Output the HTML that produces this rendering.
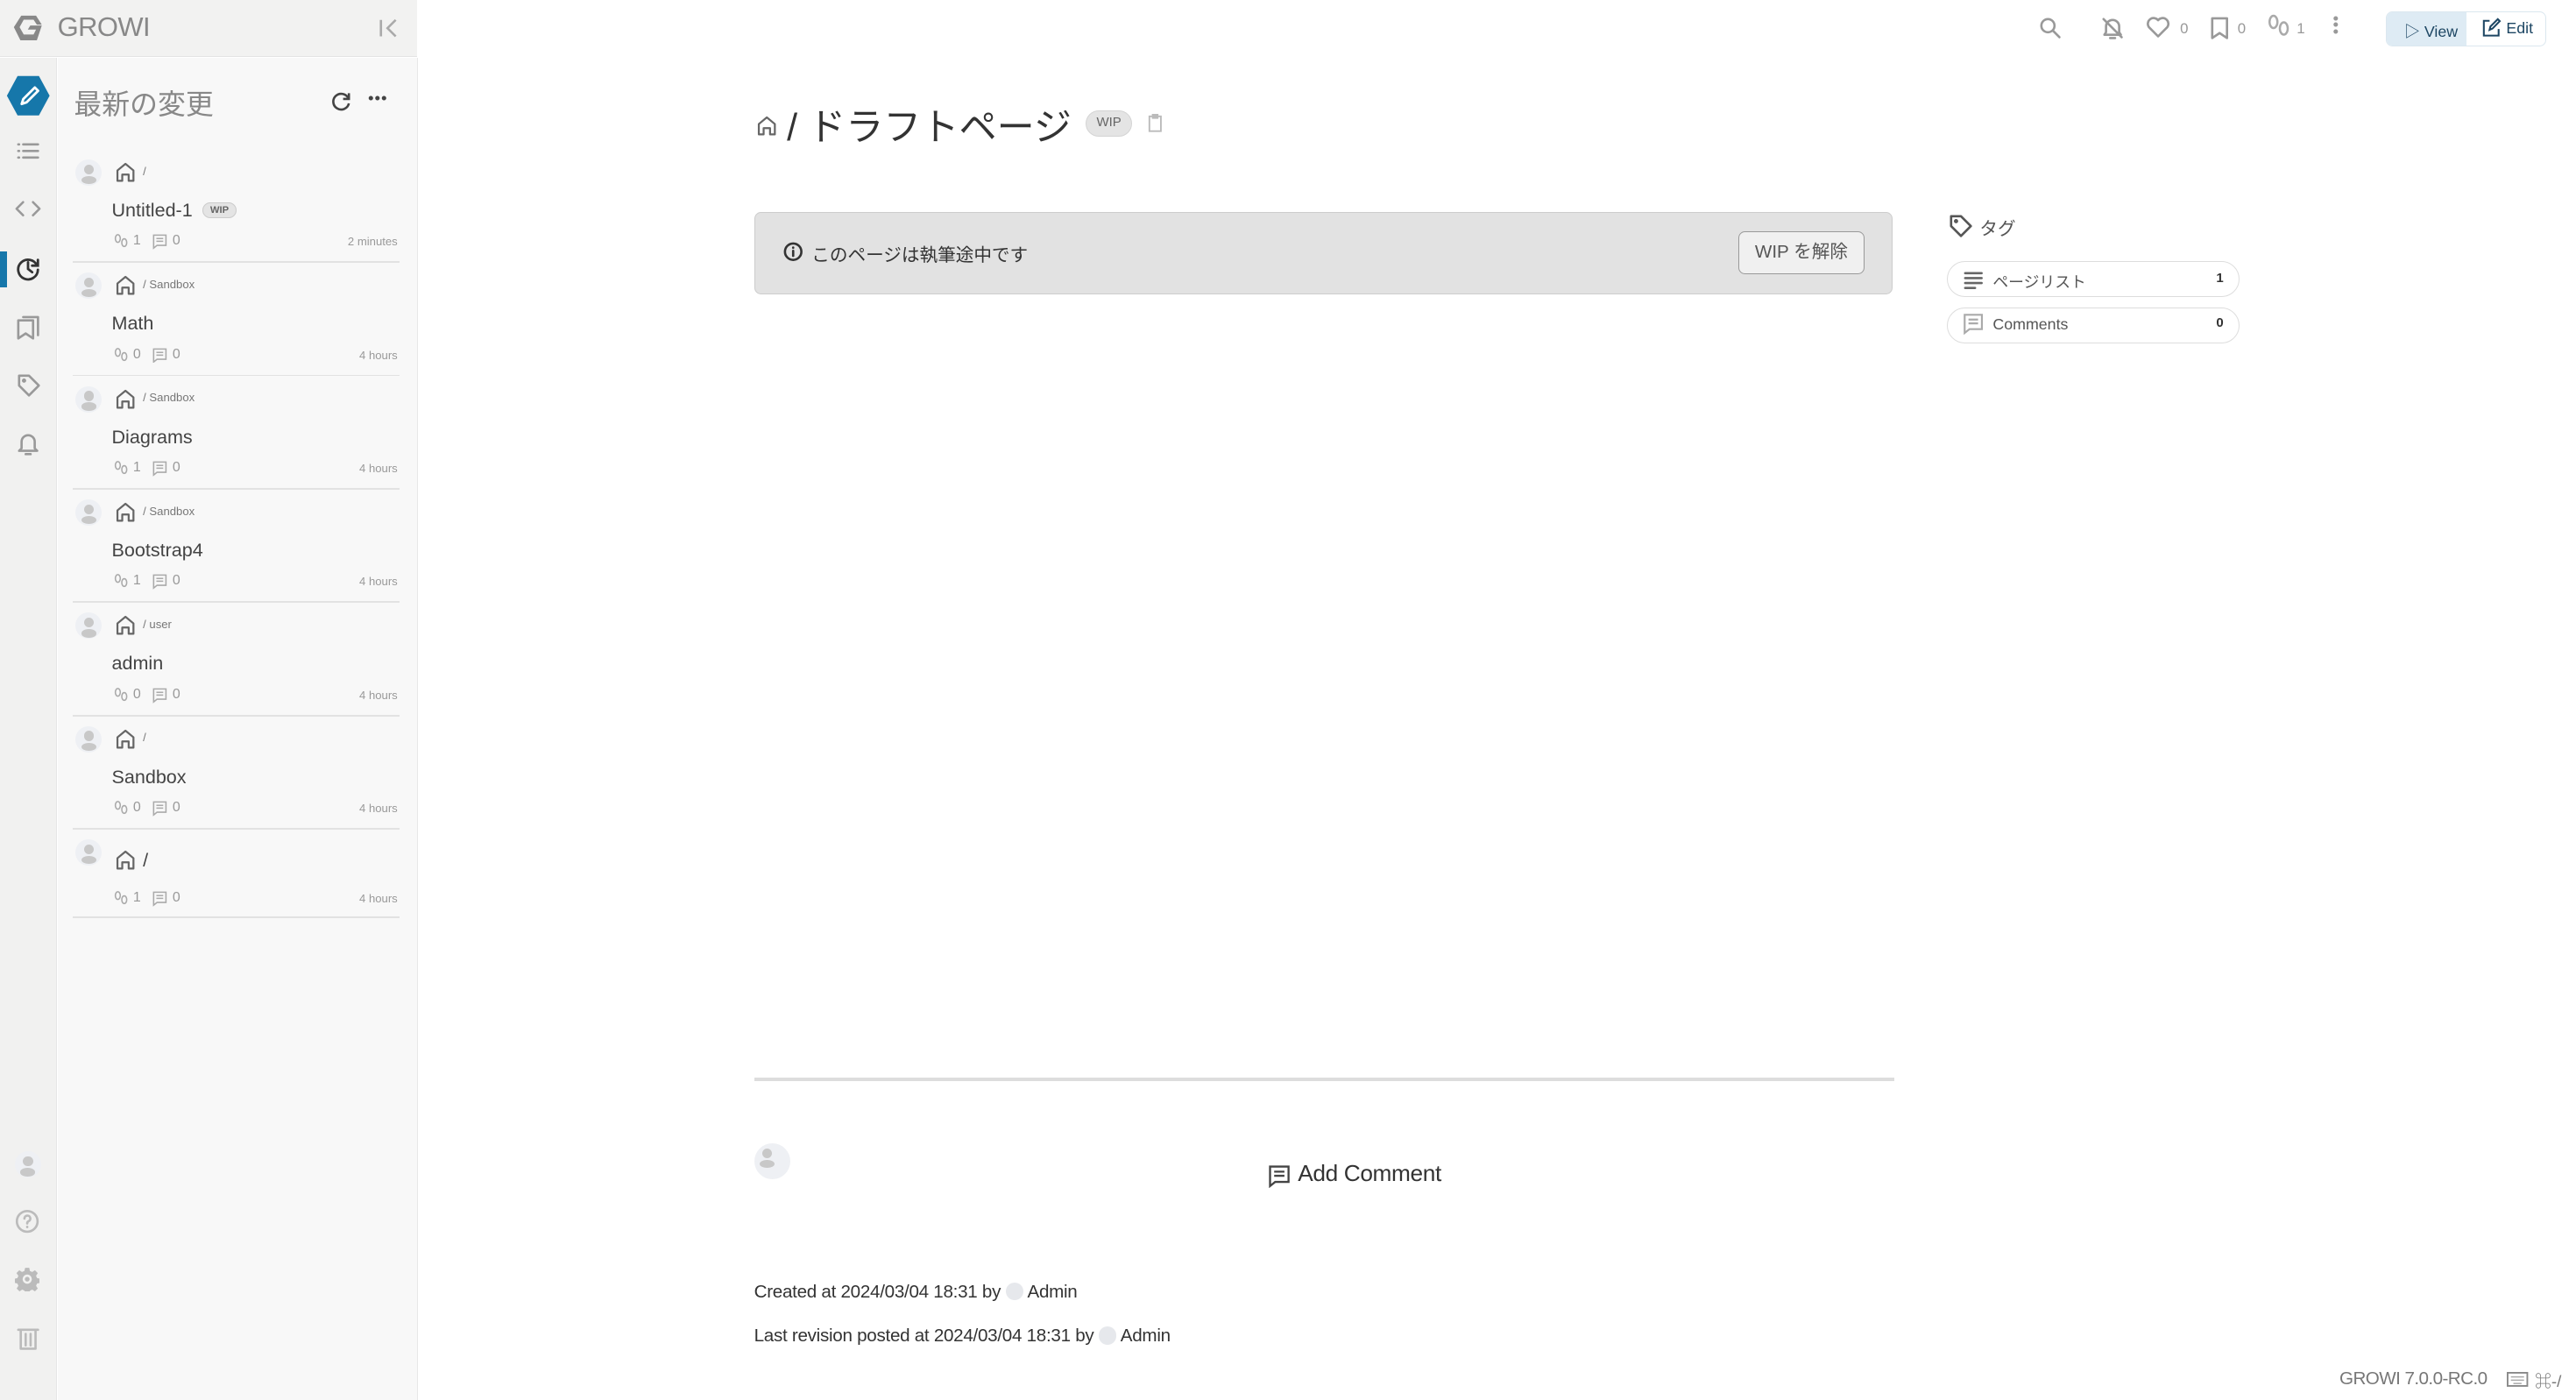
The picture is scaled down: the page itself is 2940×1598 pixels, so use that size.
<!DOCTYPE html>
<html><head><meta charset="utf-8">
<style>
html,body{margin:0;padding:0}
body{width:1568px;height:851.2px;zoom:1.875;position:relative;overflow:hidden;background:#fff;font-family:"Liberation Sans","Noto Sans CJK JP",sans-serif;color:#333}
.a{position:absolute;white-space:nowrap}
.rail{left:0;top:35px;width:34px;height:817px;background:#f1f1f0;border-right:1px solid #e6e6e6}
.hdr{left:0;top:0;width:254px;height:34px;background:#f2f2f1;border-bottom:1px solid #e4e4e4}
.panel{left:35px;top:35px;width:219px;height:817px;background:#f8f8f8;border-right:1px solid #e8e8e8}
.ic{stroke:#999;fill:none;stroke-width:1.4;stroke-linecap:round;stroke-linejoin:round}
.av{width:16px;height:16px;border-radius:50%;background:#eef0f4;overflow:hidden}
.av:before{content:"";position:absolute;left:5px;top:3px;width:6px;height:6px;border-radius:50%;background:#c8c8c8}
.av:after{content:"";position:absolute;left:3.5px;top:10px;width:9px;height:5px;border-radius:50%;background:#c8c8c8}
.path{font-size:7px;color:#777}
.title{font-size:11.5px;color:#444}
.meta{font-size:8.5px;color:#999}
.time{font-size:7px;color:#999;right:1326px}
.line{left:44px;width:199px;height:1px;background:#e2e2e2}
.wip{font-size:6px;font-weight:bold;color:#666;background:#e4e4e4;border:1px solid #ccc;border-radius:8px;padding:1px 4px}
</style></head><body>
<svg width="0" height="0" style="position:absolute">
<defs>
<symbol id="home" viewBox="0 0 12 12"><path d="M1.5 11V5.2L6 1.5l4.5 3.7V11H7.8V7.5H4.2V11z" fill="none" stroke="#666" stroke-width="1.1" stroke-linejoin="round"/></symbol>
<symbol id="foot" viewBox="0 0 12 12"><ellipse cx="3.5" cy="4" rx="1.8" ry="2.8" fill="none" stroke="#aaa" stroke-width="1"/><ellipse cx="8.2" cy="7" rx="1.8" ry="2.8" fill="none" stroke="#aaa" stroke-width="1"/></symbol>
<symbol id="cmt" viewBox="0 0 12 12"><path d="M1.5 1.5h9v7.5H4L1.5 11z M3.5 4h5 M3.5 6h5" fill="none" stroke="#aaa" stroke-width="1"/></symbol>
</defs></svg>

<div class="a hdr"></div>
<svg class="a" style="left:7px;top:8px" width="20" height="18" viewBox="0 0 20 18"><path d="M6 1.5h9l3.5 5.5h-3l-2-3H7.5L5 8.5l2.5 4.5h6l1.5-3h-5l1.5-2.5h7L15.5 16.5h-10L1.5 8.5z" fill="#888"/></svg>
<div class="a" style="left:35px;top:7px;font-size:16.5px;color:#888;letter-spacing:-0.3px">GROWI</div>
<svg class="a" style="left:230px;top:10px" width="14" height="14" viewBox="0 0 14 14"><path d="M2 2v10M11 2L6 7l5 5" fill="none" stroke="#aaa" stroke-width="1.4"/></svg>

<div class="a rail"></div>
<div class="a panel"></div>
<svg class="a" style="left:3px;top:44px" width="28" height="28" viewBox="0 0 28 28"><polygon points="7.5,2 20.5,2 27,14 20.5,26 7.5,26 1,14" fill="#1677aa"/><path d="M10 19l1-3 7-7 2 2-7 7z" fill="none" stroke="#fff" stroke-width="1.5" stroke-linejoin="round"/></svg>
<svg class="a ic" style="left:10px;top:86px" width="14" height="12" viewBox="0 0 14 12"><path d="M1 2h.5M1 6h.5M1 10h.5M4 2h9M4 6h9M4 10h9"/></svg>
<svg class="a ic" style="left:9px;top:121px" width="16" height="12" viewBox="0 0 16 12"><path d="M5 2L1 6l4 4M11 2l4 4-4 4"/></svg>
<div class="a" style="left:0;top:153px;width:4px;height:22px;background:#1677aa"></div>
<svg class="a" style="left:9px;top:155px" width="16" height="16" viewBox="0 0 16 16"><path d="M13.5 6.5A6 6 0 1 0 14 9 M14 3v3.5h-3.5 M8 4.5V8.5l2.5 2" fill="none" stroke="#333" stroke-width="1.5" stroke-linecap="round"/></svg>
<svg class="a ic" style="left:10px;top:192px" width="14" height="15" viewBox="0 0 14 15"><path d="M1 3h9v11l-4.5-3L1 14z M4 1h9v11"/></svg>
<svg class="a ic" style="left:10px;top:227px" width="15" height="15" viewBox="0 0 15 15"><path d="M1.5 1.5h6l6 6-6 6-6-6z"/><circle cx="4.5" cy="4.5" r=".6"/></svg>
<svg class="a ic" style="left:10px;top:263px" width="14" height="15" viewBox="0 0 14 15"><path d="M3 10V6a4 4 0 0 1 8 0v4l1.5 1.5h-11z M5.5 13.5h3"/></svg>
<div class="a av" style="left:9px;top:701px"></div>
<svg class="a ic" style="left:9px;top:736px" width="15" height="15" viewBox="0 0 15 15"><circle cx="7.5" cy="7.5" r="6.3" stroke="#bbb"/><path d="M5.8 5.8a1.8 1.8 0 1 1 2.4 1.7c-.6.3-.7.7-.7 1.3 M7.5 10.8v.2" stroke="#bbb"/></svg>
<svg class="a" style="left:9px;top:771px" width="15" height="15" viewBox="0 0 24 24"><path d="M10 1h4l.6 3 2.3 1 2.6-1.7 2.8 2.8-1.7 2.6 1 2.3 3 .6v4l-3 .6-1 2.3 1.7 2.6-2.8 2.8-2.6-1.7-2.3 1-.6 3h-4l-.6-3-2.3-1-2.6 1.7-2.8-2.8 1.7-2.6-1-2.3-3-.6v-4l3-.6 1-2.3L1.5 6.1l2.8-2.8 2.6 1.7 2.3-1z" fill="#bbb"/><circle cx="12" cy="12" r="4.5" fill="#f1f1f0"/><circle cx="12" cy="12" r="2.3" fill="#bbb"/></svg>
<svg class="a ic" style="left:10px;top:808px" width="14" height="14" viewBox="0 0 14 14"><path d="M1 1.5h12 M2.5 1.5V13h9V1.5 M5.5 4v7 M8.5 4v7" stroke="#bbb"/></svg>

<div class="a" style="left:45px;top:50px;font-size:17px;color:#888">最新の変更</div>
<svg class="a" style="left:201px;top:55px" width="13" height="13" viewBox="0 0 13 13"><path d="M11 5A4.8 4.8 0 1 0 11.3 8 M11.3 1.8v3.5H7.8" fill="none" stroke="#444" stroke-width="1.4"/></svg>
<div class="a" style="left:224px;top:54px;font-size:10px;color:#444;letter-spacing:0.5px">•••</div>

<div class="a av" style="left:46px;top:97px"></div>
<svg class="a" style="left:70px;top:98px" width="13" height="13"><use href="#home"/></svg>
<div class="a path" style="left:87px;top:100px">/</div>
<div class="a title" style="left:68px;top:121px">Untitled-1 <span class="wip" style="position:relative;top:-2px;margin-left:3px">WIP</span></div>
<svg class="a" style="left:69px;top:142px" width="10" height="10"><use href="#foot"/></svg><div class="a meta" style="left:81px;top:142px">1</div>
<svg class="a" style="left:92px;top:142px" width="10" height="10"><use href="#cmt"/></svg><div class="a meta" style="left:105px;top:142px">0</div>
<div class="a time" style="right:1326px;top:143px">2 minutes</div>
<div class="a line" style="top:159px"></div>

<div class="a av" style="left:46px;top:166px"></div>
<svg class="a" style="left:70px;top:167px" width="13" height="13"><use href="#home"/></svg>
<div class="a path" style="left:87px;top:169px">/ Sandbox</div>
<div class="a title" style="left:68px;top:190px">Math</div>
<svg class="a" style="left:69px;top:211px" width="10" height="10"><use href="#foot"/></svg><div class="a meta" style="left:81px;top:211px">0</div>
<svg class="a" style="left:92px;top:211px" width="10" height="10"><use href="#cmt"/></svg><div class="a meta" style="left:105px;top:211px">0</div>
<div class="a time" style="right:1326px;top:212px">4 hours</div>
<div class="a line" style="top:228px"></div>

<div class="a av" style="left:46px;top:235px"></div>
<svg class="a" style="left:70px;top:236px" width="13" height="13"><use href="#home"/></svg>
<div class="a path" style="left:87px;top:238px">/ Sandbox</div>
<div class="a title" style="left:68px;top:259px">Diagrams</div>
<svg class="a" style="left:69px;top:280px" width="10" height="10"><use href="#foot"/></svg><div class="a meta" style="left:81px;top:280px">1</div>
<svg class="a" style="left:92px;top:280px" width="10" height="10"><use href="#cmt"/></svg><div class="a meta" style="left:105px;top:280px">0</div>
<div class="a time" style="right:1326px;top:281px">4 hours</div>
<div class="a line" style="top:297px"></div>

<div class="a av" style="left:46px;top:304px"></div>
<svg class="a" style="left:70px;top:305px" width="13" height="13"><use href="#home"/></svg>
<div class="a path" style="left:87px;top:307px">/ Sandbox</div>
<div class="a title" style="left:68px;top:328px">Bootstrap4</div>
<svg class="a" style="left:69px;top:349px" width="10" height="10"><use href="#foot"/></svg><div class="a meta" style="left:81px;top:349px">1</div>
<svg class="a" style="left:92px;top:349px" width="10" height="10"><use href="#cmt"/></svg><div class="a meta" style="left:105px;top:349px">0</div>
<div class="a time" style="right:1326px;top:350px">4 hours</div>
<div class="a line" style="top:366px"></div>

<div class="a av" style="left:46px;top:373px"></div>
<svg class="a" style="left:70px;top:374px" width="13" height="13"><use href="#home"/></svg>
<div class="a path" style="left:87px;top:376px">/ user</div>
<div class="a title" style="left:68px;top:397px">admin</div>
<svg class="a" style="left:69px;top:418px" width="10" height="10"><use href="#foot"/></svg><div class="a meta" style="left:81px;top:418px">0</div>
<svg class="a" style="left:92px;top:418px" width="10" height="10"><use href="#cmt"/></svg><div class="a meta" style="left:105px;top:418px">0</div>
<div class="a time" style="right:1326px;top:419px">4 hours</div>
<div class="a line" style="top:435px"></div>

<div class="a av" style="left:46px;top:442px"></div>
<svg class="a" style="left:70px;top:443px" width="13" height="13"><use href="#home"/></svg>
<div class="a path" style="left:87px;top:445px">/</div>
<div class="a title" style="left:68px;top:466px">Sandbox</div>
<svg class="a" style="left:69px;top:487px" width="10" height="10"><use href="#foot"/></svg><div class="a meta" style="left:81px;top:487px">0</div>
<svg class="a" style="left:92px;top:487px" width="10" height="10"><use href="#cmt"/></svg><div class="a meta" style="left:105px;top:487px">0</div>
<div class="a time" style="right:1326px;top:488px">4 hours</div>
<div class="a line" style="top:504px"></div>

<div class="a av" style="left:46px;top:511px"></div>
<svg class="a" style="left:70px;top:517px" width="13" height="13"><use href="#home"/></svg>
<div class="a title" style="left:87px;top:517px">/</div>
<svg class="a" style="left:69px;top:542px" width="10" height="10"><use href="#foot"/></svg><div class="a meta" style="left:81px;top:542px">1</div>
<svg class="a" style="left:92px;top:542px" width="10" height="10"><use href="#cmt"/></svg><div class="a meta" style="left:105px;top:542px">0</div>
<div class="a time" style="right:1326px;top:543px">4 hours</div>
<div class="a line" style="top:558px"></div>

<svg class="a ic" style="left:1241px;top:10px" width="14" height="14" viewBox="0 0 14 14"><circle cx="5.5" cy="5.5" r="4"/><path d="M8.5 8.5l4 4"/></svg>
<svg class="a ic" style="left:1279px;top:10px" width="14" height="14" viewBox="0 0 14 14"><path d="M3 9.5V6a4 4 0 0 1 8 0v3.5l1 1.5H2z M5.5 13h3 M1.5 1.5l11 11"/></svg>
<svg class="a ic" style="left:1306px;top:10px" width="15" height="13" viewBox="0 0 15 13"><path d="M7.5 12L2 6.5A3.2 3.2 0 0 1 7.5 2.2 3.2 3.2 0 0 1 13 6.5z"/></svg>
<div class="a" style="left:1327px;top:12px;font-size:9px;color:#999">0</div>
<svg class="a ic" style="left:1345px;top:10px" width="12" height="14" viewBox="0 0 12 14"><path d="M1.5 1h9v12L6 10l-4.5 3z"/></svg>
<div class="a" style="left:1362px;top:12px;font-size:9px;color:#999">0</div>
<svg class="a" style="left:1379px;top:8px" width="16" height="16"><use href="#foot"/></svg>
<div class="a" style="left:1398px;top:12px;font-size:9px;color:#999">1</div>
<div class="a" style="left:1420px;top:9px;width:3px;font-size:10px;color:#999;line-height:4px;white-space:normal">•<br>•<br>•</div>
<div class="a" style="left:1452px;top:7px;width:97px;height:20px;border:1px solid #dbe7ef;border-radius:4px;background:#fff;overflow:hidden">
 <div class="a" style="left:0;top:0;width:49px;height:20px;background:#deebf4"></div>
 <div class="a" style="left:11px;top:4px;font-size:9.5px;color:#1d4663">▷ View</div>
 <svg class="a" style="left:58px;top:3px" width="12" height="12" viewBox="0 0 12 12"><path d="M5 2H1.5v9h9V7 M5 7.5l.5-2L10 1l1.2 1.2L6.8 6.7z" fill="none" stroke="#1d4663" stroke-width="1.1"/></svg>
 <div class="a" style="left:73px;top:4px;font-size:9.5px;color:#1d4663">Edit</div>
</div>

<svg class="a" style="left:460px;top:70px" width="13" height="13"><use href="#home"/></svg>
<div class="a" style="left:479px;top:59px;font-size:23px;color:#333">/ ドラフトページ</div>
<div class="a" style="left:661px;top:67px;width:28px;height:16px;border-radius:8px;background:#e4e4e4;border:1px solid #d4d4d4;box-sizing:border-box;font-size:8px;color:#666;text-align:center;line-height:14px">WIP</div>
<svg class="a" style="left:698px;top:69px" width="10" height="12" viewBox="0 0 10 12"><path d="M1.5 2h7v9h-7z M3.5 1h3v2h-3z" fill="none" stroke="#bbb" stroke-width="1"/></svg>

<div class="a" style="left:459px;top:129px;width:692px;height:49px;background:#e2e2e2;border:1px solid #ccc;border-radius:4px"></div>
<svg class="a ic" style="left:477px;top:147px" width="12" height="12" viewBox="0 0 12 12"><circle cx="6" cy="6" r="5" stroke="#333"/><path d="M6 5.5v3 M6 3.5v.1" stroke="#333"/></svg>
<div class="a" style="left:494px;top:146px;font-size:11px;color:#333">このページは執筆途中です</div>
<div class="a" style="left:1058px;top:141px;width:77px;height:26px;box-sizing:border-box;border:1px solid #999;border-radius:4px;background:#f0f0f0;font-size:11px;color:#555;text-align:center;line-height:24px">WIP を解除</div>

<svg class="a ic" style="left:1186px;top:130px" width="15" height="15" viewBox="0 0 15 15"><path d="M1.5 1.5h6l6 6-6 6-6-6z" stroke="#555"/><circle cx="4.5" cy="4.5" r=".6" stroke="#555"/></svg>
<div class="a" style="left:1205px;top:130px;font-size:11px;color:#555">タグ</div>
<div class="a" style="left:1185px;top:159px;width:178px;height:22px;box-sizing:border-box;border:1px solid #ddd;border-radius:11px;background:#fff"></div>
<svg class="a ic" style="left:1195px;top:164px" width="12" height="12" viewBox="0 0 12 12"><path d="M1 2h10M1 5h10M1 8h10M1 11h6" stroke="#666"/></svg>
<div class="a" style="left:1213px;top:164px;font-size:9.5px;color:#555">ページリスト</div>
<div class="a" style="left:1349px;top:165px;font-size:8px;color:#333;font-weight:bold">1</div>
<div class="a" style="left:1185px;top:187px;width:178px;height:22px;box-sizing:border-box;border:1px solid #ddd;border-radius:11px;background:#fff"></div>
<svg class="a" style="left:1194px;top:190px" width="14" height="14"><use href="#cmt"/></svg>
<div class="a" style="left:1213px;top:192px;font-size:9.5px;color:#555">Comments</div>
<div class="a" style="left:1349px;top:192px;font-size:8px;color:#333;font-weight:bold">0</div>

<div class="a" style="left:459px;top:656px;width:694px;height:2px;background:#ddd"></div>
<div class="a av" style="left:459px;top:696px;width:22px;height:22px"></div>
<svg class="a" style="left:771px;top:708px" width="15" height="15" viewBox="0 0 12 12"><path d="M1.5 1.5h9v7.5H4L1.5 11z M3.5 4h5 M3.5 6h5" fill="none" stroke="#444" stroke-width="1"/></svg>
<div class="a" style="left:790px;top:706px;font-size:14px;color:#333;letter-spacing:-0.2px">Add Comment</div>
<div class="a" style="left:459px;top:780px;font-size:11px;color:#333;letter-spacing:-0.15px">Created at 2024/03/04 18:31 by <span style="display:inline-block;width:11px;height:11px;border-radius:50%;background:#e6e8ec;vertical-align:-2px"></span> Admin</div>
<div class="a" style="left:459px;top:807px;font-size:11px;color:#333;letter-spacing:-0.15px">Last revision posted at 2024/03/04 18:31 by <span style="display:inline-block;width:11px;height:11px;border-radius:50%;background:#e6e8ec;vertical-align:-2px"></span> Admin</div>
<div class="a" style="left:1424px;top:833px;font-size:11px;color:#777;letter-spacing:-0.3px">GROWI 7.0.0-RC.0</div>
<svg class="a" style="left:1526px;top:835px" width="13" height="9" viewBox="0 0 13 9"><rect x=".5" y=".5" width="12" height="8" fill="none" stroke="#888"/><path d="M2.5 3h8M2.5 5h8M4 7h5" stroke="#aaa" stroke-width=".8"/></svg>
<div class="a" style="left:1543px;top:833px;font-size:10px;color:#777">⌘-/</div>
</body></html>
